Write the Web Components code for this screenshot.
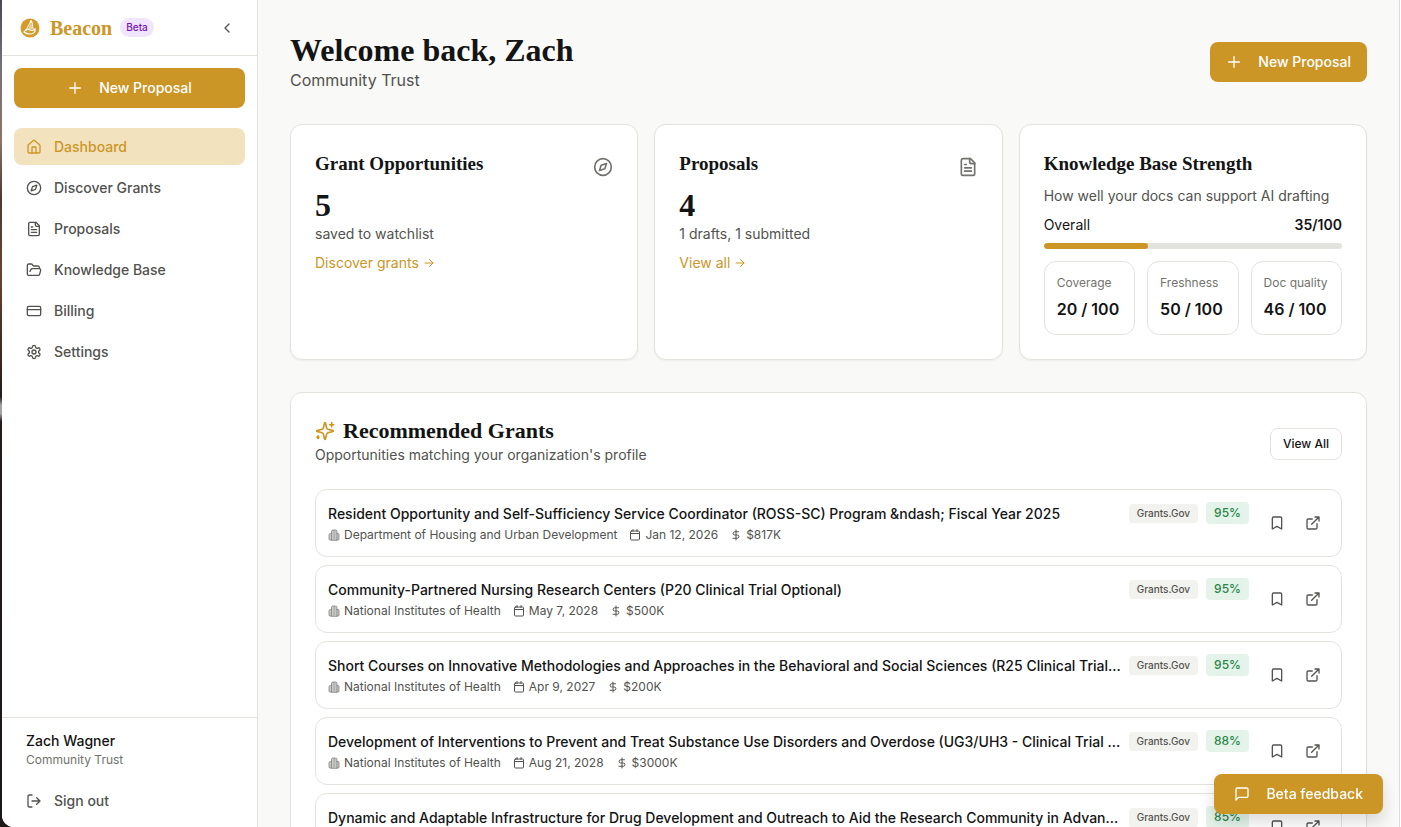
<!DOCTYPE html>
<html lang="en">
<head>
<meta charset="utf-8">
<meta name="viewport" content="width=device-width, initial-scale=1">
<title>Beacon</title>
<style>
  :root {
    --gold: #cc9627;
    --gold-soft: #f3e2be;
    --ink: #141414;
    --text: #52524e;
    --muted: #73736e;
    --line: #e3e3de;
    --sans: Inter, "Liberation Sans", sans-serif;
    --serif: "Liberation Serif", serif;
  }
  body {
    margin: 0;
    /* desktop wallpaper showing past the window's left edge */
    background: linear-gradient(#4b4856, #77707c 8%, #8d7466 17%, #4c3a35 24%, #6b4230 33%, #241b19 48%, #a3a3a3 49%, #a3a3a3 50%, #241b19 51%, #1c1817);
    color: var(--ink);
    font: 14px/20px var(--sans);
  }
</style>
</head>
<body>
<app-shell>
  <side-bar slot="sidebar">
    <nav-item icon="home" active>Dashboard</nav-item>
    <nav-item icon="compass">Discover Grants</nav-item>
    <nav-item icon="file">Proposals</nav-item>
    <nav-item icon="folder">Knowledge Base</nav-item>
    <nav-item icon="card">Billing</nav-item>
    <nav-item icon="settings">Settings</nav-item>
    <user-panel slot="footer" name="Zach Wagner" org="Community Trust"></user-panel>
  </side-bar>

  <page-header heading="Welcome back, Zach" sub="Community Trust">
    <gold-button icon="plus">New Proposal</gold-button>
  </page-header>

  <card-grid>
    <stat-card heading="Grant Opportunities" icon="compass" value="5" link="Discover grants">saved to watchlist</stat-card>
    <stat-card heading="Proposals" icon="file" value="4" link="View all">1 drafts, 1 submitted</stat-card>
    <strength-card heading="Knowledge Base Strength" score="35">
      <score-tile label="Coverage" value="20"></score-tile>
      <score-tile label="Freshness" value="50"></score-tile>
      <score-tile label="Doc quality" value="46"></score-tile>
    </strength-card>
  </card-grid>

  <grant-list heading="Recommended Grants" sub="Opportunities matching your organization's profile">
    <grant-row agency="Department of Housing and Urban Development" date="Jan 12, 2026" amount="$817K" match="95%">Resident Opportunity and Self-Sufficiency Service Coordinator (ROSS-SC) Program &amp;ndash; Fiscal Year 2025</grant-row>
    <grant-row agency="National Institutes of Health" date="May 7, 2028" amount="$500K" match="95%">Community-Partnered Nursing Research Centers (P20 Clinical Trial Optional)</grant-row>
    <grant-row agency="National Institutes of Health" date="Apr 9, 2027" amount="$200K" match="95%">Short Courses on Innovative Methodologies and Approaches in the Behavioral and Social Sciences (R25 Clinical Trial...</grant-row>
    <grant-row agency="National Institutes of Health" date="Aug 21, 2028" amount="$3000K" match="88%">Development of Interventions to Prevent and Treat Substance Use Disorders and Overdose (UG3/UH3 - Clinical Trial ...</grant-row>
    <grant-row agency="National Institutes of Health" date="May 7, 2028" amount="$500K" match="85%">Dynamic and Adaptable Infrastructure for Drug Development and Outreach to Aid the Research Community in Advan...</grant-row>
  </grant-list>

  <gold-button slot="overlay" icon="message" raised>Beta feedback</gold-button>
</app-shell>

<script>
const ICONS = {
  home: '<path d="M15 21v-8a1 1 0 0 0-1-1h-4a1 1 0 0 0-1 1v8"/><path d="M3 10a2 2 0 0 1 .7-1.5l7-6a2 2 0 0 1 2.6 0l7 6A2 2 0 0 1 21 10v9a2 2 0 0 1-2 2H5a2 2 0 0 1-2-2z"/>',
  compass: '<circle cx="12" cy="12" r="10"/><path d="m16.2 7.8-2 6.3-6.400 2.100 2-6.300z"/>',
  file: '<path d="M15 2H6a2 2 0 0 0-2 2v16a2 2 0 0 0 2 2h12a2 2 0 0 0 2-2V7z"/><path d="M14 2v4a2 2 0 0 0 2 2h4M10 9H8M16 13H8M16 17H8"/>',
  folder: '<path d="m6 14 1.500-2.900A2 2 0 0 1 9.240 10H20a2 2 0 0 1 1.940 2.500l-1.540 6a2 2 0 0 1-1.950 1.500H4a2 2 0 0 1-2-2V5a2 2 0 0 1 2-2h3.900a2 2 0 0 1 1.690.900l.810 1.200a2 2 0 0 0 1.670.900H18a2 2 0 0 1 2 2v2"/>',
  card: '<rect width="20" height="14" x="2" y="5" rx="2"/><path d="M2 10h20"/>',
  settings: '<path d="M12.220 2h-.440a2 2 0 0 0-2 2v.180a2 2 0 0 1-1 1.730l-.430.250a2 2 0 0 1-2 0l-.150-.080a2 2 0 0 0-2.730.730l-.220.380a2 2 0 0 0 .730 2.730l.150.100a2 2 0 0 1 1 1.720v.510a2 2 0 0 1-1 1.740l-.150.090a2 2 0 0 0-.730 2.730l.220.380a2 2 0 0 0 2.730.730l.150-.080a2 2 0 0 1 2 0l.430.250a2 2 0 0 1 1 1.730V20a2 2 0 0 0 2 2h.440a2 2 0 0 0 2-2v-.180a2 2 0 0 1 1-1.730l.430-.250a2 2 0 0 1 2 0l.150.080a2 2 0 0 0 2.730-.730l.220-.390a2 2 0 0 0-.730-2.730l-.150-.080a2 2 0 0 1-1-1.740v-.500a2 2 0 0 1 1-1.740l.150-.090a2 2 0 0 0 .730-2.730l-.220-.380a2 2 0 0 0-2.730-.730l-.150.080a2 2 0 0 1-2 0l-.430-.250a2 2 0 0 1-1-1.730V4a2 2 0 0 0-2-2z"/><circle cx="12" cy="12" r="3"/>',
  plus: '<path d="M4 12h16M12 4v16"/>',
  chevron: '<path d="m15 18-6-6 6-6"/>',
  logout: '<path d="M9 21H5a2 2 0 0 1-2-2V5a2 2 0 0 1 2-2h4M16 17l5-5-5-5M21 12H9"/>',
  arrow: '<path d="M4 12h16M13 5l7 7-7 7"/>',
  sparkles: '<path d="M9.940 15.500A2 2 0 0 0 8.500 14.060l-6.140-1.580a.5.5 0 0 1 0-.960L8.500 9.940A2 2 0 0 0 9.940 8.500l1.580-6.140a.5.5 0 0 1 .960 0l1.580 6.140a2 2 0 0 0 1.440 1.440l6.140 1.580a.5.5 0 0 1 0 .960l-6.140 1.580a2 2 0 0 0-1.440 1.440l-1.580 6.140a.5.5 0 0 1-.960 0z"/><path d="M20 2v5M22.500 4.500h-5M4 18v3"/><circle cx="3.500" cy="19.500" r="1"/>',
  building: '<g opacity=".75"><path d="M7 22V5a3 3 0 0 1 3-3h5a3 3 0 0 1 3 3v17zM7 9H5a3 3 0 0 0-3 3v8a2 2 0 0 0 2 2h3M18 9h2a2 2 0 0 1 2 2v9a2 2 0 0 1-2 2h-2" fill="currentColor" fill-opacity=".4" stroke-width="1.5"/><path d="M12.500 4v16" stroke-width="4" stroke-opacity=".3"/></g>',
  calendar: '<path d="M8 1v4M16 1v4M3 9h18"/><rect width="18" height="18" x="3" y="4" rx="2"/>',
  dollar: '<path d="M12 2v20M17 5.500H9.500a3.200 3.200 0 0 0 0 6.500h5a3.200 3.200 0 0 1 0 6.500H6"/>',
  bookmark: '<path d="m19 21-7-4-7 4V5a2 2 0 0 1 2-2h10a2 2 0 0 1 2 2z"/>',
  external: '<path d="M15 3h6v6M10 14 21 3M18 13v6a2 2 0 0 1-2 2H5a2 2 0 0 1-2-2V8a2 2 0 0 1 2-2h6"/>',
  message: '<path d="M21 15a2 2 0 0 1-2 2H7l-4 4V5a2 2 0 0 1 2-2h14a2 2 0 0 1 2 2z"/>'
};

// Shared base: renders the subclass's markup into an open shadow root.
class BeaconElement extends HTMLElement {
  constructor() {
    super();
    this.attachShadow({ mode: "open" });
  }

  attr(name) {
    return this.getAttribute(name) || "";
  }

  connectedCallback() {
    this.shadowRoot.innerHTML = this.render();
  }
}

class AppIcon extends BeaconElement {
  render() {
    const size = this.attr("size") || 16;
    return `
      <style>
        :host { display: inline-flex; flex: none; }
        svg { display: block; fill: none; stroke: currentColor; stroke-linecap: round; stroke-linejoin: round; }
      </style>
      <svg width="${size}" height="${size}" viewBox="0 0 24 24" stroke-width="2" aria-hidden="true">${ICONS[this.attr("name")]}</svg>
    `;
  }
}

class GoldButton extends BeaconElement {
  render() {
    return `
      <style>
        :host { display: block; flex: none; }
        button {
          display: flex; align-items: center; justify-content: center; gap: 16px;
          width: 100%; height: 40px; padding: 0 16px;
          border: 0; border-radius: 8px; background: var(--gold); color: #fff;
          font: 500 14px/20px var(--sans); cursor: pointer;
        }
        :host([raised]) button { padding: 0 20px; box-shadow: 0 8px 16px rgba(0, 0, 0, .14); }
      </style>
      <button type="button"><app-icon name="${this.attr("icon")}"></app-icon><slot></slot></button>
    `;
  }
}

class NavItem extends BeaconElement {
  render() {
    return `
      <style>
        :host { display: block; }
        a {
          display: flex; align-items: center; gap: 12px;
          height: 37px; padding: 0 12px; border-radius: 8px;
          color: var(--text); font-weight: 500; text-decoration: none;
        }
        :host([active]) a { background: var(--gold-soft); color: var(--gold); }
      </style>
      <a href="#"><app-icon name="${this.attr("icon")}"></app-icon><slot></slot></a>
    `;
  }
}

class UserPanel extends BeaconElement {
  render() {
    return `
      <style>
        :host { display: block; padding: 12px 12px 8px; border-top: 1px solid var(--line); }
        .who { padding: 0 12px; margin-bottom: 14px; }
        .name { font-weight: 500; line-height: 22px; }
        .org { color: var(--muted); font-size: 12px; line-height: 16px; }
      </style>
      <div class="who">
        <div class="name">${this.attr("name")}</div>
        <div class="org">${this.attr("org")}</div>
      </div>
      <nav-item icon="logout">Sign out</nav-item>
    `;
  }
}

class SideBar extends BeaconElement {
  render() {
    return `
      <style>
        :host { display: flex; flex-direction: column; flex: none; width: 255px; background: #fff; border-right: 1px solid var(--line); }
        header { display: flex; align-items: center; height: 55px; padding: 0 20px 0 16px; border-bottom: 1px solid var(--line); }
        .logo { display: block; flex: none; margin-right: 8px; }
        .brand { color: var(--gold); font: bold 20px/28px var(--serif); }
        .beta { margin-left: 8px; padding: 0 6px; border-radius: 10px; background: #f1e5fe; color: #7514b8; font-size: 10px; font-weight: 500; line-height: 19px; }
        header button { display: flex; margin-left: auto; padding: 2px; border: 0; background: none; color: var(--text); }
        .body { display: flex; flex-direction: column; flex: 1; padding: 12px; }
        nav { display: flex; flex-direction: column; gap: 4px; margin-top: 20px; }
      </style>
      <header>
        <svg class="logo" width="24" height="24" viewBox="0 0 24 24" aria-hidden="true">
          <circle cx="12" cy="12" r="9.500" fill="#d49a2a"/>
          <path d="m13 6 1.500 7-5 1z" fill="#fff" opacity=".55"/>
          <path d="m12.500 6-5 9M14 6l1 7" stroke="#fff" fill="none"/>
          <path d="M6 16c2-3 4-3 6-2s4 0 5-1c1 3-2 5-5 5s-5-1-6-2z" fill="none" stroke="#fff" stroke-width="1.200"/>
          <circle cx="13" cy="5.500" r="1.200" fill="#fff"/>
        </svg>
        <span class="brand">Beacon</span>
        <span class="beta">Beta</span>
        <button type="button" aria-label="Collapse sidebar"><app-icon name="chevron"></app-icon></button>
      </header>
      <div class="body">
        <gold-button icon="plus">New Proposal</gold-button>
        <nav><slot></slot></nav>
      </div>
      <slot name="footer"></slot>
    `;
  }
}

class PageHeader extends BeaconElement {
  render() {
    return `
      <style>
        :host { display: flex; align-items: center; justify-content: space-between; }
        h1 { margin: 0; font: bold 32px/36px var(--serif); }
        p { margin: 0; color: var(--text); font-size: 16px; line-height: 24px; }
      </style>
      <div><h1>${this.attr("heading")}</h1><p>${this.attr("sub")}</p></div>
      <slot></slot>
    `;
  }
}

class CardGrid extends BeaconElement {
  render() {
    return `
      <style>
        :host { display: grid; grid-template-columns: repeat(3, minmax(0, 1fr)); gap: 16px; }
      </style>
      <slot></slot>
    `;
  }
}

const CARD = `
  :host { display: block; padding: 24px; border: 1px solid var(--line); border-radius: 12px; background: #fff; box-shadow: 0 1px 2px rgba(0, 0, 0, .05); }
  h2 { margin: 0; font: bold 19px/30px var(--serif); }
`;

class StatCard extends BeaconElement {
  render() {
    return `
      <style>
        ${CARD}
        .top { display: flex; justify-content: space-between; }
        .top app-icon { margin-top: 8px; color: var(--muted); }
        .value { margin-top: 8px; font: bold 32px/36px var(--serif); }
        .note { color: var(--text); line-height: 22px; }
        a { display: inline-flex; align-items: center; gap: 4px; margin-top: 8px; color: var(--gold); text-decoration: none; }
      </style>
      <div class="top"><h2>${this.attr("heading")}</h2><app-icon name="${this.attr("icon")}" size="20"></app-icon></div>
      <div class="value">${this.attr("value")}</div>
      <div class="note"><slot></slot></div>
      <a href="#">${this.attr("link")} <app-icon name="arrow" size="12"></app-icon></a>
    `;
  }
}

class StrengthCard extends BeaconElement {
  render() {
    const score = this.attr("score");
    return `
      <style>
        ${CARD}
        p { margin: 6px 0 8px; color: var(--text); line-height: 22px; }
        .overall { display: flex; justify-content: space-between; }
        .overall strong { font-weight: 600; }
        .bar { height: 6px; margin: 8px 0 12px; border-radius: 3px; background: var(--line); overflow: hidden; }
        .fill { width: ${score}%; height: 100%; border-radius: 3px; background: var(--gold); }
        .tiles { display: grid; grid-template-columns: repeat(3, minmax(0, 1fr)); gap: 12px; }
      </style>
      <h2>${this.attr("heading")}</h2>
      <p>How well your docs can support AI drafting</p>
      <div class="overall"><span>Overall</span><strong>${score}/100</strong></div>
      <div class="bar" role="progressbar" aria-label="Overall" aria-valuenow="${score}"><div class="fill"></div></div>
      <div class="tiles"><slot></slot></div>
    `;
  }
}

class ScoreTile extends BeaconElement {
  render() {
    return `
      <style>
        :host { display: block; padding: 12px; border: 1px solid var(--line); border-radius: 12px; white-space: nowrap; }
        .label { margin-bottom: 4px; color: var(--muted); font-size: 12px; line-height: 18px; }
        .value { font-size: 16px; font-weight: 600; line-height: 26px; }
      </style>
      <div class="label">${this.attr("label")}</div>
      <div class="value">${this.attr("value")} / 100</div>
    `;
  }
}

class GrantList extends BeaconElement {
  render() {
    return `
      <style>
        ${CARD}
        header { display: flex; align-items: center; justify-content: space-between; min-height: 54px; margin-bottom: 18px; }
        .intro { align-self: flex-start; }
        .title { display: flex; align-items: center; gap: 8px; color: var(--gold); }
        h2 { color: var(--ink); font-size: 22px; line-height: 28px; }
        p { margin: 0; color: var(--text); }
        button { height: 32px; padding: 0 12px; border: 1px solid var(--line); border-radius: 8px; background: #fff; color: var(--ink); font: 500 12px/16px var(--sans); }
        .rows { display: flex; flex-direction: column; gap: 8px; }
      </style>
      <header>
        <div class="intro">
          <div class="title"><app-icon name="sparkles" size="20"></app-icon><h2>${this.attr("heading")}</h2></div>
          <p>${this.attr("sub")}</p>
        </div>
        <button type="button">View All</button>
      </header>
      <div class="rows"><slot></slot></div>
    `;
  }
}

class GrantRow extends BeaconElement {
  render() {
    return `
      <style>
        :host { display: flex; align-items: center; gap: 12px; padding: 12px; border: 1px solid var(--line); border-radius: 12px; }
        .info { flex: 1; min-width: 0; }
        .head { display: flex; align-items: flex-start; gap: 4px; }
        .name { flex: 1; min-width: 0; overflow: hidden; font-weight: 500; line-height: 24px; text-overflow: ellipsis; white-space: nowrap; }
        .tag { margin: 2px 4px 0 0; padding: 0 8px; border-radius: 4px; background: #f2f2ee; color: var(--text); font-size: 10px; font-weight: 500; line-height: 19px; }
        .match { padding: 0 8px; border-radius: 4px; background: #e4f4ea; color: #2b8548; font-size: 12px; font-weight: 500; line-height: 22px; }
        .meta { display: flex; gap: 12px; color: var(--text); font-size: 12px; line-height: 18px; }
        .meta span { display: flex; align-items: center; gap: 4px; }
        .actions { display: flex; gap: 4px; }
        button { display: grid; place-items: center; width: 32px; height: 32px; padding: 0; border: 0; background: none; color: var(--text); }
      </style>
      <div class="info">
        <div class="head">
          <div class="name"><slot></slot></div>
          <span class="tag">Grants.Gov</span>
          <span class="match">${this.attr("match")}</span>
        </div>
        <div class="meta">
          <span><app-icon name="building" size="12"></app-icon>${this.attr("agency")}</span>
          <span><app-icon name="calendar" size="12"></app-icon>${this.attr("date")}</span>
          <span><app-icon name="dollar" size="12"></app-icon>${this.attr("amount")}</span>
        </div>
      </div>
      <div class="actions">
        <button type="button" aria-label="Save grant"><app-icon name="bookmark"></app-icon></button>
        <button type="button" aria-label="Open grant"><app-icon name="external"></app-icon></button>
      </div>
    `;
  }
}

class AppShell extends BeaconElement {
  render() {
    return `
      <style>
        :host { display: flex; height: 100vh; margin-left: 2px; border-radius: 0 0 0 12px; overflow: hidden; background: #fff; }
        main { flex: 1; display: flex; flex-direction: column; gap: 32px; min-width: 0; margin-right: 1px; padding: 32px; border-right: 1px solid #dcdce0; background: #f9f9f7; overflow: auto; scrollbar-width: none; }
        .overlay { position: fixed; right: 18px; bottom: 13px; }
      </style>
      <slot name="sidebar"></slot>
      <main><slot></slot></main>
      <div class="overlay"><slot name="overlay"></slot></div>
    `;
  }
}

customElements.define("app-icon", AppIcon);
customElements.define("gold-button", GoldButton);
customElements.define("nav-item", NavItem);
customElements.define("user-panel", UserPanel);
customElements.define("side-bar", SideBar);
customElements.define("page-header", PageHeader);
customElements.define("card-grid", CardGrid);
customElements.define("stat-card", StatCard);
customElements.define("strength-card", StrengthCard);
customElements.define("score-tile", ScoreTile);
customElements.define("grant-list", GrantList);
customElements.define("grant-row", GrantRow);
customElements.define("app-shell", AppShell);
</script>
</body>
</html>
